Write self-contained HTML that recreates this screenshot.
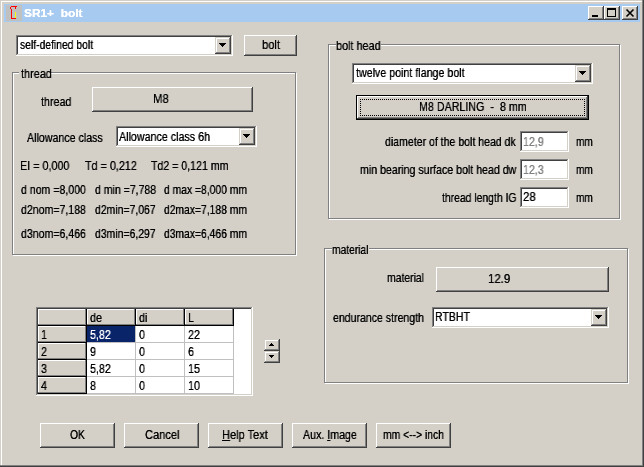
<!DOCTYPE html>
<html><head><meta charset="utf-8"><title>SR1+ bolt</title>
<style>
html,body{margin:0;padding:0;}
body{width:644px;height:467px;overflow:hidden;background:#d4d0c8;position:relative;font-family:"Liberation Sans",sans-serif;font-size:12px;color:#000;}
.a{position:absolute;}
.t{position:absolute;white-space:pre;line-height:14px;height:14px;transform-origin:0 0;will-change:transform;text-shadow:0 0 0 currentColor;}
.g{position:absolute;white-space:pre;line-height:14px;height:14px;transform:scaleX(.89);transform-origin:0 0;will-change:transform;text-shadow:0 0 0 currentColor;}
.btn{position:absolute;box-sizing:border-box;background:#d4d0c8;box-shadow:inset -1px -1px 0 #404040,inset 1px 1px 0 #fff,inset -2px -2px 0 #808080;text-align:center;white-space:pre;}
.sunk{position:absolute;box-sizing:border-box;background:#fff;box-shadow:inset -1px -1px 0 #fff,inset 1px 1px 0 #808080,inset -2px -2px 0 #d4d0c8,inset 2px 2px 0 #404040;}
.grp{position:absolute;box-sizing:border-box;border:1px solid #808080;box-shadow:1px 1px 0 #fff,inset 1px 1px 0 #fff;}
.gl{position:absolute;background:#d4d0c8;line-height:14px;height:14px;}
.dd{position:absolute;width:16px;height:17px;box-sizing:border-box;background:#d4d0c8;box-shadow:inset -1px -1px 0 #404040,inset 1px 1px 0 #d4d0c8,inset -2px -2px 0 #808080,inset 2px 2px 0 #fff;}
.dd i{position:absolute;background:#000;height:1px;}
.dd.c i{margin-left:-1px;}
.hc{position:absolute;width:48px;height:16px;box-sizing:border-box;background:#d4d0c8;box-shadow:inset -1px -1px 0 #808080,inset 1px 1px 0 #fff;}
u{text-decoration:underline;}
</style></head><body>
<!-- window frame -->
<div class="a" style="left:1px;top:1px;width:641px;height:1px;background:#fff"></div>
<div class="a" style="left:1px;top:1px;width:1px;height:464px;background:#fff"></div>
<div class="a" style="left:642px;top:0;width:1px;height:467px;background:#808080"></div>
<div class="a" style="left:643px;top:0;width:1px;height:467px;background:#404040"></div>
<div class="a" style="left:0;top:465px;width:643px;height:1px;background:#808080"></div>
<div class="a" style="left:0;top:466px;width:644px;height:1px;background:#404040"></div>
<!-- title bar -->
<div class="a" style="left:4px;top:4px;width:636px;height:18px;background:#a6caf0"></div>
<div class="a" style="left:6px;top:5px;width:16px;height:16px;background:#c0c0c0">
<svg width="16" height="16" viewBox="0 0 16 16" style="position:absolute;left:0;top:0" shape-rendering="crispEdges">
<rect x="5" y="1" width="6" height="1" fill="#f00"/>
<rect x="4" y="2" width="1" height="2" fill="#f00"/>
<rect x="9" y="2" width="1" height="2" fill="#f00"/>
<rect x="5" y="4" width="1" height="10" fill="#f00"/>
<rect x="5" y="13" width="5" height="1" fill="#f00"/>
<rect x="9" y="7" width="1" height="6" fill="#ff0"/>
</svg></div>
<div class="a" style="left:23.6px;top:6px;color:#fff;font-weight:bold;font-size:11px;line-height:14px;white-space:pre;transform:scaleX(1.08);transform-origin:0 0;will-change:transform;text-shadow:0 0 0 #fff;">SR1+  bolt</div>
<!-- caption buttons -->
<div class="btn" style="left:588px;top:6px;width:16px;height:14px;"><div class="a" style="left:4px;top:9px;width:6px;height:2px;background:#000"></div></div>
<div class="btn" style="left:604px;top:6px;width:16px;height:14px;"><div class="a" style="left:3px;top:2px;width:9px;height:9px;box-sizing:border-box;border:1px solid #000;border-top-width:2px"></div></div>
<div class="btn" style="left:622px;top:6px;width:16px;height:14px;"><svg width="16" height="14" class="a" style="left:0;top:0"><path d="M4.5 3.5L11.5 10.5M11.5 3.5L4.5 10.5" stroke="#000" stroke-width="1.6" fill="none"/></svg></div>

<!-- top-left combo -->
<div class="sunk" style="left:16px;top:35px;width:217px;height:21px;"></div>
<div class="dd c" style="left:215px;top:37px;"><i style="left:5px;top:6px;width:7px"></i><i style="left:6px;top:7px;width:5px"></i><i style="left:7px;top:8px;width:3px"></i><i style="left:8px;top:9px;width:1px"></i></div>
<div class="btn" style="left:244px;top:35px;width:53px;height:21px;line-height:21px;"></div>

<!-- thread group -->
<div class="grp" style="left:12px;top:72px;width:284px;height:183px;"></div>
<div class="gl" style="left:19px;top:72px;width:32px;height:2px"></div>
<div class="btn" style="left:92px;top:87px;width:161px;height:25px;line-height:24px;"></div>
<div class="sunk" style="left:116px;top:126px;width:141px;height:21px;"></div>
<div class="dd c" style="left:239px;top:128px;"><i style="left:5px;top:6px;width:7px"></i><i style="left:6px;top:7px;width:5px"></i><i style="left:7px;top:8px;width:3px"></i><i style="left:8px;top:9px;width:1px"></i></div>

<!-- bolt head group -->
<div class="grp" style="left:328px;top:44px;width:292px;height:175px;"></div>
<div class="gl" style="left:336px;top:44px;width:45px;height:2px"></div>
<div class="sunk" style="left:352px;top:63px;width:241px;height:21px;"></div>
<div class="dd c" style="left:575px;top:65px;"><i style="left:5px;top:6px;width:7px"></i><i style="left:6px;top:7px;width:5px"></i><i style="left:7px;top:8px;width:3px"></i><i style="left:8px;top:9px;width:1px"></i></div>
<div class="a" style="left:356px;top:95px;width:233px;height:25px;background:#000"></div>
<div class="btn" style="left:357px;top:96px;width:231px;height:23px;line-height:23px;"></div>
<div class="a" style="left:360px;top:99px;width:225px;height:17px;box-sizing:border-box;border:1px dotted #000"></div>
<div class="sunk" style="left:520px;top:131px;width:49px;height:21px;"></div>
<div class="sunk" style="left:520px;top:159px;width:49px;height:21px;"></div>
<div class="sunk" style="left:520px;top:187px;width:49px;height:21px;"></div>

<!-- material group -->
<div class="grp" style="left:324px;top:248px;width:304px;height:135px;"></div>
<div class="gl" style="left:332px;top:248px;width:37px;height:2px"></div>
<div class="btn" style="left:436px;top:267px;width:173px;height:25px;line-height:24px;"></div>
<div class="sunk" style="left:432px;top:307px;width:177px;height:21px;"></div>
<div class="dd c" style="left:591px;top:309px;"><i style="left:5px;top:6px;width:7px"></i><i style="left:6px;top:7px;width:5px"></i><i style="left:7px;top:8px;width:3px"></i><i style="left:8px;top:9px;width:1px"></i></div>

<!-- grid -->
<div class="sunk" style="left:36px;top:307px;width:217px;height:89px;"></div>
<div class="a" style="left:38px;top:309px;width:196px;height:17px;background:#000"></div>
<div class="a" style="left:38px;top:326px;width:49px;height:68px;background:#000"></div>
<div class="a" style="left:87px;top:326px;width:147px;height:68px;background:#c0c0c0"></div>
<div class="hc" style="left:38px;top:309px;"></div>
<div class="hc" style="left:87px;top:309px;"></div>
<div class="g" style="left:89.5px;top:311px;">de</div>
<div class="hc" style="left:136px;top:309px;"></div>
<div class="g" style="left:138.5px;top:311px;">di</div>
<div class="hc" style="left:185px;top:309px;"></div>
<div class="g" style="left:187.5px;top:311px;">L</div>
<div class="hc" style="left:38px;top:326px;"></div>
<div class="g" style="left:40.5px;top:328px;">1</div>
<div class="a" style="left:87px;top:326px;width:48px;height:16px;background:#0a246a"></div>
<div class="g" style="left:89.5px;top:328px;color:#fff">5,82</div>
<div class="a" style="left:136px;top:326px;width:48px;height:16px;background:#fff"></div>
<div class="g" style="left:138.5px;top:328px;">0</div>
<div class="a" style="left:185px;top:326px;width:48px;height:16px;background:#fff"></div>
<div class="g" style="left:187.5px;top:328px;">22</div>
<div class="hc" style="left:38px;top:343px;"></div>
<div class="g" style="left:40.5px;top:345px;">2</div>
<div class="a" style="left:87px;top:343px;width:48px;height:16px;background:#fff"></div>
<div class="g" style="left:89.5px;top:345px;">9</div>
<div class="a" style="left:136px;top:343px;width:48px;height:16px;background:#fff"></div>
<div class="g" style="left:138.5px;top:345px;">0</div>
<div class="a" style="left:185px;top:343px;width:48px;height:16px;background:#fff"></div>
<div class="g" style="left:187.5px;top:345px;">6</div>
<div class="hc" style="left:38px;top:360px;"></div>
<div class="g" style="left:40.5px;top:362px;">3</div>
<div class="a" style="left:87px;top:360px;width:48px;height:16px;background:#fff"></div>
<div class="g" style="left:89.5px;top:362px;">5,82</div>
<div class="a" style="left:136px;top:360px;width:48px;height:16px;background:#fff"></div>
<div class="g" style="left:138.5px;top:362px;">0</div>
<div class="a" style="left:185px;top:360px;width:48px;height:16px;background:#fff"></div>
<div class="g" style="left:187.5px;top:362px;">15</div>
<div class="hc" style="left:38px;top:377px;"></div>
<div class="g" style="left:40.5px;top:379px;">4</div>
<div class="a" style="left:87px;top:377px;width:48px;height:16px;background:#fff"></div>
<div class="g" style="left:89.5px;top:379px;">8</div>
<div class="a" style="left:136px;top:377px;width:48px;height:16px;background:#fff"></div>
<div class="g" style="left:138.5px;top:379px;">0</div>
<div class="a" style="left:185px;top:377px;width:48px;height:16px;background:#fff"></div>
<div class="g" style="left:187.5px;top:379px;">10</div>

<!-- spin -->
<div class="dd" style="left:264px;top:339px;width:16px;height:12px;"><i style="left:7px;top:4px;width:1px"></i><i style="left:6px;top:5px;width:3px"></i><i style="left:5px;top:6px;width:5px"></i></div>
<div class="dd" style="left:264px;top:351px;width:16px;height:12px;"><i style="left:5px;top:4px;width:5px"></i><i style="left:6px;top:5px;width:3px"></i><i style="left:7px;top:6px;width:1px"></i></div>

<!-- bottom buttons -->
<div class="btn" style="left:40px;top:423px;width:75px;height:25px;line-height:25px;"></div>
<div class="btn" style="left:124px;top:423px;width:75px;height:25px;line-height:25px;"></div>
<div class="btn" style="left:208px;top:423px;width:75px;height:25px;line-height:25px;"></div>
<div class="btn" style="left:292px;top:423px;width:75px;height:25px;line-height:25px;"></div>
<div class="btn" style="left:376px;top:423px;width:75px;height:25px;line-height:25px;"></div>
<div class="t" style="left:19.90px;top:38px;transform:scaleX(0.862)">self-defined bolt</div>
<div class="t" style="left:261.57px;top:38px;transform:scaleX(0.931)">bolt</div>
<div class="t" style="left:20.75px;top:67px;transform:scaleX(0.909)">thread</div>
<div class="t" style="left:40.50px;top:95px;transform:scaleX(0.894)">thread</div>
<div class="t" style="left:152.98px;top:92px;transform:scaleX(0.950)">M8</div>
<div class="t" style="left:27.00px;top:131px;transform:scaleX(0.888)">Allowance class</div>
<div class="t" style="left:119.00px;top:130px;transform:scaleX(0.892)">Allowance class 6h</div>
<div class="t" style="left:19.85px;top:159px;transform:scaleX(0.898)">EI = 0,000</div>
<div class="t" style="left:85.00px;top:159px;transform:scaleX(0.899)">Td = 0,212</div>
<div class="t" style="left:150.80px;top:159px;transform:scaleX(0.883)">Td2 = 0,121 mm</div>
<div class="t" style="left:20.75px;top:183px;transform:scaleX(0.880)">d nom =8,000</div>
<div class="t" style="left:94.50px;top:183px;transform:scaleX(0.877)">d min =7,788</div>
<div class="t" style="left:164.40px;top:183px;transform:scaleX(0.860)">d max =8,000 mm</div>
<div class="t" style="left:20.75px;top:203px;transform:scaleX(0.880)">d2nom=7,188</div>
<div class="t" style="left:94.50px;top:203px;transform:scaleX(0.870)">d2min=7,067</div>
<div class="t" style="left:164.40px;top:203px;transform:scaleX(0.860)">d2max=7,188 mm</div>
<div class="t" style="left:20.75px;top:227px;transform:scaleX(0.880)">d3nom=6,466</div>
<div class="t" style="left:94.50px;top:227px;transform:scaleX(0.870)">d3min=6,297</div>
<div class="t" style="left:164.40px;top:227px;transform:scaleX(0.860)">d3max=6,466 mm</div>
<div class="t" style="left:335.90px;top:39px;transform:scaleX(0.904)">bolt head</div>
<div class="t" style="left:356.00px;top:66px;transform:scaleX(0.889)">twelve point flange bolt</div>
<div class="t" style="left:418.71px;top:100px;transform:scaleX(0.892)">M8 DARLING  -  8 mm</div>
<div class="t" style="left:384.50px;top:135px;transform:scaleX(0.879)">diameter of the bolt head dk</div>
<div class="t" style="left:523.41px;top:135px;color:#808080;transform:scaleX(0.886)">12,9</div>
<div class="t" style="left:576.10px;top:135px;transform:scaleX(0.840)">mm</div>
<div class="t" style="left:359.62px;top:163px;transform:scaleX(0.884)">min bearing surface bolt head dw</div>
<div class="t" style="left:523.41px;top:163px;color:#808080;transform:scaleX(0.886)">12,3</div>
<div class="t" style="left:576.10px;top:163px;transform:scaleX(0.840)">mm</div>
<div class="t" style="left:442.00px;top:191px;transform:scaleX(0.865)">thread length IG</div>
<div class="t" style="left:523.05px;top:190px;transform:scaleX(0.950)">28</div>
<div class="t" style="left:576.10px;top:191px;transform:scaleX(0.840)">mm</div>
<div class="t" style="left:332.15px;top:243px;transform:scaleX(0.854)">material</div>
<div class="t" style="left:386.63px;top:271px;transform:scaleX(0.866)">material</div>
<div class="t" style="left:487.85px;top:272px;transform:scaleX(0.950)">12.9</div>
<div class="t" style="left:333.00px;top:311px;transform:scaleX(0.879)">endurance strength</div>
<div class="t" style="left:434.62px;top:310px;transform:scaleX(0.878)">RTBHT</div>
<div class="t" style="left:70.40px;top:428px;transform:scaleX(0.859)">OK</div>
<div class="t" style="left:144.58px;top:428px;transform:scaleX(0.924)">Cancel</div>
<div class="t" style="left:222.00px;top:428px;transform:scaleX(0.920)"><u>H</u>elp Text</div>
<div class="t" style="left:303.00px;top:428px;transform:scaleX(0.887)">Aux. <u>I</u>mage</div>
<div class="t" style="left:382.89px;top:428px;transform:scaleX(0.862)">mm &lt;--&gt; inch</div>
</body></html>
